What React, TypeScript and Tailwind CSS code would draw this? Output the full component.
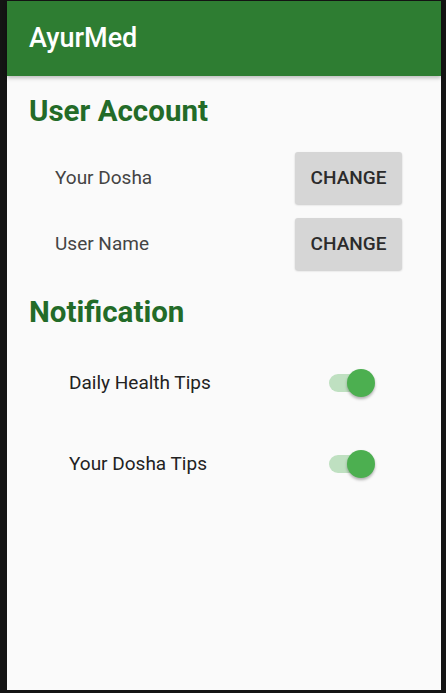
const accountRows = ["Your Dosha", "User Name"];
const tipRows = ["Daily Health Tips", "Your Dosha Tips"];

const Toggle = () => (
  <div className="relative w-[46px] h-[28px]">
    <div className="absolute left-0 top-[5px] w-[42px] h-[18px] rounded-full bg-[#bfe0c1]" />
    <div className="absolute right-0 top-0 w-[28px] h-[28px] rounded-full bg-[#4caf50] shadow-[0_2px_3px_rgba(0,0,0,0.3)]" />
  </div>
);

const App = () => {
  return (
    <div
      className="w-[446px] h-[693px] bg-[#141414] pl-[7px] pr-[5px] pt-[1px] pb-[3px]"
      style={{ fontFamily: "Roboto, 'Noto Sans', sans-serif" }}
    >
      <div className="flex flex-col h-full bg-[#fafafa]">
        <header className="h-[75px] shrink-0 bg-[#2e7d32] flex items-center px-[22px] shadow-[0_2px_4px_rgba(0,0,0,0.25)]">
          <h1 className="text-white text-[27px] font-medium">AyurMed</h1>
        </header>

        <section className="px-[22px]">
          <h2 className="mt-[18px] h-[34px] leading-[34px] text-[29.5px] font-bold text-[#236b28]">
            User Account
          </h2>
          <div className="mt-[24px] flex flex-col gap-[14px]">
            {accountRows.map((label) => (
              <div key={label} className="flex items-center justify-between pl-[26px] pr-[17px]">
                <span className="text-[19px] text-[#444444]">{label}</span>
                <button className="w-[107px] h-[52px] rounded-[3px] bg-[#d6d6d6] text-[19px] font-medium text-[#2b2b2b] shadow-[0_1px_2px_rgba(0,0,0,0.2)]">
                  CHANGE
                </button>
              </div>
            ))}
          </div>
        </section>

        <section className="px-[22px]">
          <h2 className="mt-[25px] h-[34px] leading-[34px] text-[29.5px] font-bold text-[#236b28]">
            Notification
          </h2>
          <div className="mt-[40px] flex flex-col gap-[52px]">
            {tipRows.map((label) => (
              <div key={label} className="flex items-center justify-between pl-[40px] pr-[44px]">
                <span className="text-[19px] text-[#222222]">{label}</span>
                <Toggle />
              </div>
            ))}
          </div>
        </section>
      </div>
    </div>
  );
};

export default App;
